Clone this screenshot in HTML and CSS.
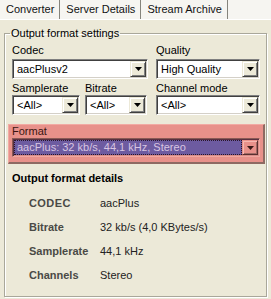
FILE: index.html
```html
<!DOCTYPE html>
<html lang="en">
<head>
  <meta charset="UTF-8" />
  <title>Converter</title>
  <link rel="stylesheet" href="styles.css">
</head>
<body>
  <div class="tabs">
    <div class="tab active">Converter</div>
    <div class="tab">Server Details</div>
    <div class="tab">Stream Archive</div>
  </div>
  <div class="page">
    <fieldset class="group">
      <legend>Output format settings</legend>
      <div class="row">
        <div class="field codec">
          <label>Codec</label>
          <div class="combo"><span class="value">aacPlusv2</span><span class="btn"><svg width="7" height="4"><path d="M0 0h7L3.5 4z"/></svg></span></div>
        </div>
        <div class="field quality">
          <label>Quality</label>
          <div class="combo"><span class="value">High Quality</span><span class="btn"><svg width="7" height="4"><path d="M0 0h7L3.5 4z"/></svg></span></div>
        </div>
      </div>
      <div class="row second">
        <div class="field samplerate">
          <label>Samplerate</label>
          <div class="combo"><span class="value">&lt;All&gt;</span><span class="btn"><svg width="7" height="4"><path d="M0 0h7L3.5 4z"/></svg></span></div>
        </div>
        <div class="field bitrate">
          <label>Bitrate</label>
          <div class="combo"><span class="value">&lt;All&gt;</span><span class="btn"><svg width="7" height="4"><path d="M0 0h7L3.5 4z"/></svg></span></div>
        </div>
        <div class="field quality">
          <label>Channel mode</label>
          <div class="combo"><span class="value">&lt;All&gt;</span><span class="btn"><svg width="7" height="4"><path d="M0 0h7L3.5 4z"/></svg></span></div>
        </div>
      </div>
      <div class="format">
        <label>Format</label>
        <div class="combo focus"><span class="value">aacPlus: 32 kb/s, 44,1 kHz, Stereo</span><span class="btn"><svg width="7" height="4"><path d="M0 0h7L3.5 4z"/></svg></span></div>
      </div>
      <h2>Output format details</h2>
      <div class="details">
        <span class="key caps">CODEC</span><span>aacPlus</span>
        <span class="key">Bitrate</span><span>32 kb/s (4,0 KBytes/s)</span>
        <span class="key">Samplerate</span><span>44,1 kHz</span>
        <span class="key">Channels</span><span>Stereo</span>
      </div>
    </fieldset>
  </div>
</body>
</html>
```

FILE: styles.css
```css
* {
  box-sizing: border-box;
}

body {
  margin: 0;
  width: 271px;
  height: 299px;
  overflow: hidden;
  font-family: "Liberation Sans", Arial, sans-serif;
  font-size: 11px;
  color: #000;
  background: #ece9d8;
}

.tabs {
  display: flex;
  height: 20px;
  background: #f6f5f1;
  border-bottom: 1px solid #fff;
}

.tab {
  height: 19px;
  padding: 2px 5px 0 6px;
  line-height: 14px;
  border-right: 1px solid #85847c;
  color: #111;
}

.page {
  padding: 7px 4px 0;
}

.group {
  margin: 0;
  min-width: 0;
  padding: 4px 6px 9px 7px;
  border: 1px solid #a9a79a;
  box-shadow: inset 1px 1px 0 #fff, 1px 1px 0 #fff;
}

.group legend {
  padding: 0 1px;
  margin-left: -2px;
  line-height: 13px;
}

.row {
  display: flex;
  justify-content: space-between;
}

.row.second {
  margin-top: 3px;
}

.field label,
.format label {
  display: block;
  line-height: 13px;
}

.field .combo {
  margin-top: 2px;
}

.row.second .combo {
  margin-top: 0;
}

.codec { width: 136px; }
.quality { width: 104px; }
.samplerate { width: 68px; margin-right: 5px; }
.bitrate { width: 62px; margin-right: auto; }

.combo {
  display: flex;
  height: 20px;
  background: #fff;
  border: 1px solid;
  border-color: #7f7f7f #fff #fff #7f7f7f;
  box-shadow: inset 1px 1px 0 #404040, inset -1px -1px 0 #d4d0c8;
  padding: 1px;
}

.combo .value {
  flex: 1;
  min-width: 0;
  padding-left: 3px;
  line-height: 16px;
  white-space: nowrap;
  overflow: hidden;
}

.combo .btn {
  width: 16px;
  display: flex;
  align-items: center;
  justify-content: center;
  background: #ece9d8;
  border: 1px solid;
  border-color: #ece9d8 #404040 #404040 #ece9d8;
  box-shadow: inset 1px 1px 0 #fff, inset -1px -1px 0 #808080;
}

.combo .btn svg {
  fill: #000;
}

.format {
  margin: 9px -5px 0 -4px;
  padding: 0 3px 5px 3px;
  background: #e8918a;
  border: 1px solid;
  border-color: #f2aaa3 #8e6a62 #8e6a62 #f2aaa3;
  border-width: 1px 2px 2px 1px;
}

.format label {
  color: #3a1510;
  line-height: 13px;
}

.combo.focus {
  height: 19px;
  background: #6d5ba0;
  border-color: #8a5a55 #f0a8a0 #f0a8a0 #8a5a55;
  box-shadow: inset 1px 1px 0 #5a3040, inset -1px -1px 0 #d88c86;
}

.combo.focus .value {
  color: #d8c5e2;
  line-height: 15px;
  outline: 1px dotted #2a1528;
  outline-offset: -1px;
}

.combo.focus .btn {
  background: #e8918a;
  border-color: #e8918a #5a3030 #5a3030 #e8918a;
  box-shadow: inset 1px 1px 0 #f6b8b0, inset -1px -1px 0 #a06a64;
}

.combo.focus .btn svg {
  fill: #3a1a18;
}

h2 {
  margin: 2px 0 0;
  font-size: 11px;
  font-weight: bold;
  line-height: 24px;
}

.details {
  display: grid;
  grid-template-columns: 71px auto;
  margin-top: 1px;
  padding-left: 17px;
  line-height: 24px;
  color: #222;
}

.details .key {
  font-weight: bold;
  color: #4a4a46;
}

.details .caps {
  letter-spacing: 0.4px;
}
```
